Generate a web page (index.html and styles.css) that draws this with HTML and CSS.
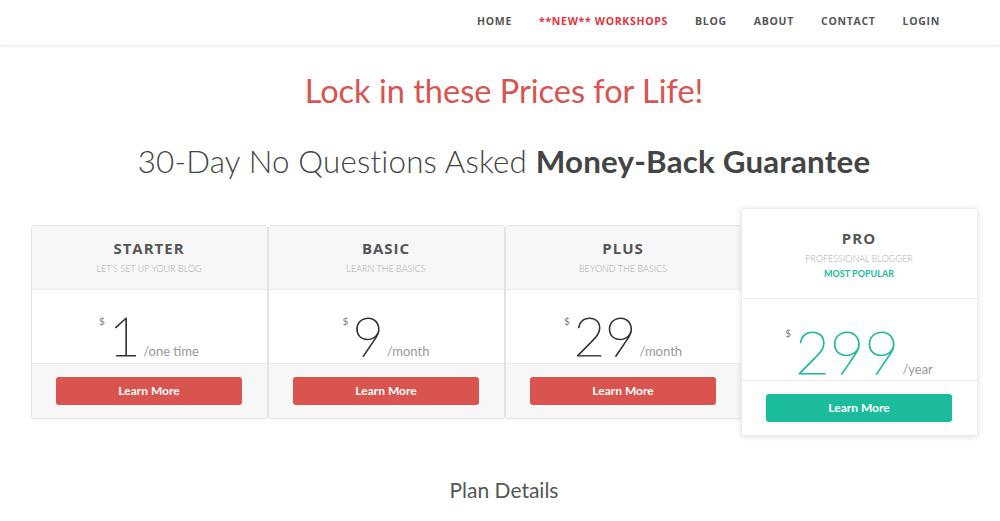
FILE: index.html
```html
<!DOCTYPE html>
<html lang="en">
  <head>
    <meta charset="UTF-8" />
    <meta name="viewport" content="width=device-width, initial-scale=1.0" />
    <title>Pricing</title>
    <link rel="stylesheet" href="styles.css">
  </head>
  <body>
    <!-- top navigation -->
    <div class="navbar">
      <div class="menu">
        <a href="#">HOME</a>
        <a href="#" class="hot">**NEW** WORKSHOPS</a>
        <a href="#">BLOG</a>
        <a href="#">ABOUT</a>
        <a href="#">CONTACT</a>
        <a href="#">LOGIN</a>
      </div>
    </div>

    <div class="content">
      <h1 class="lock">Lock in these Prices for Life!</h1>
      <h2 class="guarantee">30-Day No Questions Asked <b>Money-Back Guarantee</b></h2>

      <!-- pricing table -->
      <div class="plans">
        <div class="plan">
          <div class="plan-head">
            <div class="plan-name">STARTER</div>
            <div class="plan-sub">LET'S SET UP YOUR BLOG</div>
          </div>
          <div class="plan-price">
            <span class="currency">$</span><span class="amount">1</span><span class="period">/one time</span>
          </div>
          <div class="plan-foot"><a class="btn" href="#">Learn More</a></div>
        </div>

        <div class="plan">
          <div class="plan-head">
            <div class="plan-name">BASIC</div>
            <div class="plan-sub">LEARN THE BASICS</div>
          </div>
          <div class="plan-price">
            <span class="currency">$</span><span class="amount">9</span><span class="period">/month</span>
          </div>
          <div class="plan-foot"><a class="btn" href="#">Learn More</a></div>
        </div>

        <div class="plan">
          <div class="plan-head">
            <div class="plan-name">PLUS</div>
            <div class="plan-sub">BEYOND THE BASICS</div>
          </div>
          <div class="plan-price">
            <span class="currency">$</span><span class="amount">29</span><span class="period">/month</span>
          </div>
          <div class="plan-foot"><a class="btn" href="#">Learn More</a></div>
        </div>

        <div class="plan featured">
          <div class="plan-head">
            <div class="plan-name">PRO</div>
            <div class="plan-sub">PROFESSIONAL BLOGGER</div>
            <div class="popular">MOST POPULAR</div>
          </div>
          <div class="plan-price">
            <span class="currency">$</span><span class="amount">299</span><span class="period">/year</span>
          </div>
          <div class="plan-foot"><a class="btn" href="#">Learn More</a></div>
        </div>
      </div>

      <h3 class="details">Plan Details</h3>
    </div>
  </body>
</html>
```

FILE: styles.css
```css
/* base */
* {
  padding: 0;
  margin: 0;
  box-sizing: border-box;
}
body {
  font-family: "Lato", "Open Sans", sans-serif;
  background: #ffffff;
  color: #444;
}

/* navbar */
.navbar {
  height: 46px;
  background: #fff;
  box-shadow: 0 1px 3px rgba(0, 0, 0, 0.06);
  border-bottom: 1px solid #f0f0f0;
}
.menu {
  display: flex;
  justify-content: flex-end;
  align-items: center;
  height: 100%;
  gap: 27px;
  padding-right: 60px;
  padding-bottom: 4px;
}
.menu a {
  font-family: "Open Sans", sans-serif;
  font-size: 10.5px;
  font-weight: 700;
  letter-spacing: 0.7px;
  color: #555;
  text-decoration: none;
}
.menu a.hot {
  color: #e2343d;
}

/* headings */
.content {
  padding-left: 8px;
}
.lock {
  margin-top: 27px;
  text-align: center;
  font-size: 32.5px;
  line-height: 36px;
  font-weight: 400;
  color: #d9534f;
}
.guarantee {
  margin-top: 34px;
  text-align: center;
  font-size: 31.3px;
  line-height: 36px;
  font-weight: 300;
  letter-spacing: 0.2px;
  color: #444;
}
.guarantee b {
  font-weight: 700;
}

/* pricing table */
.plans {
  display: flex;
  align-items: center;
  width: 947px;
  margin: 29px auto 0;
}
.plan {
  width: 237px;
  border: 1px solid #e4e4e4;
  border-radius: 3px;
  background: #fff;
  text-align: center;
  box-shadow: 0 1px 2px rgba(0, 0, 0, 0.04);
}
.plan-head {
  background: #f7f7f7;
  padding: 13px 0 14px;
  border-bottom: 1px solid #ececec;
}
.plan-name {
  font-family: "Open Sans", sans-serif;
  font-size: 15px;
  line-height: 18px;
  font-weight: 700;
  letter-spacing: 1px;
  color: #555;
}
.plan-sub {
  margin-top: 6px;
  font-size: 9px;
  line-height: 12px;
  font-weight: 300;
  color: #aaa;
}
.plan-price {
  height: 74px;
  padding-top: 19px;
  border-bottom: 1px solid #ececec;
  color: #333;
}
.currency {
  font-size: 10px;
  color: #777;
  vertical-align: top;
  position: relative;
  top: 6px;
  margin-right: 4px;
}
.amount {
  font-size: 54px;
  line-height: 54px;
  font-weight: 100;
  -webkit-text-stroke: 0.9px currentColor;
}
.period {
  font-size: 13px;
  color: #999;
  margin-left: 3px;
}
.plan-foot {
  background: #f7f7f7;
  padding: 13px 0 13px;
}
.btn {
  display: block;
  width: 186px;
  height: 28px;
  margin: 0 auto;
  line-height: 28px;
  border-radius: 3px;
  background: #d9534f;
  color: #fff;
  font-size: 12px;
  font-weight: 700;
  text-decoration: none;
}

/* featured plan */
.featured {
  position: relative;
  z-index: 1;
  margin-left: -1px;
  border-color: #ececec;
  box-shadow: 0 1px 6px rgba(0, 0, 0, 0.12);
}
.featured .plan-head {
  background: #fff;
  padding: 20px 0 18px;
}
.featured .plan-sub {
  margin-top: 6px;
}
.popular {
  margin-top: 3px;
  font-size: 9px;
  line-height: 12px;
  font-weight: 700;
  color: #1abc9c;
}
.featured .plan-price {
  height: 82px;
  padding-top: 22px;
}
.featured .amount {
  font-size: 60px;
  line-height: 60px;
  color: #1abc9c;
}
.featured .plan-foot {
  background: #fff;
}
.featured .btn {
  background: #1abc9c;
}

.details {
  margin-top: 41px;
  text-align: center;
  font-size: 21px;
  font-weight: 400;
  color: #555;
}
```
